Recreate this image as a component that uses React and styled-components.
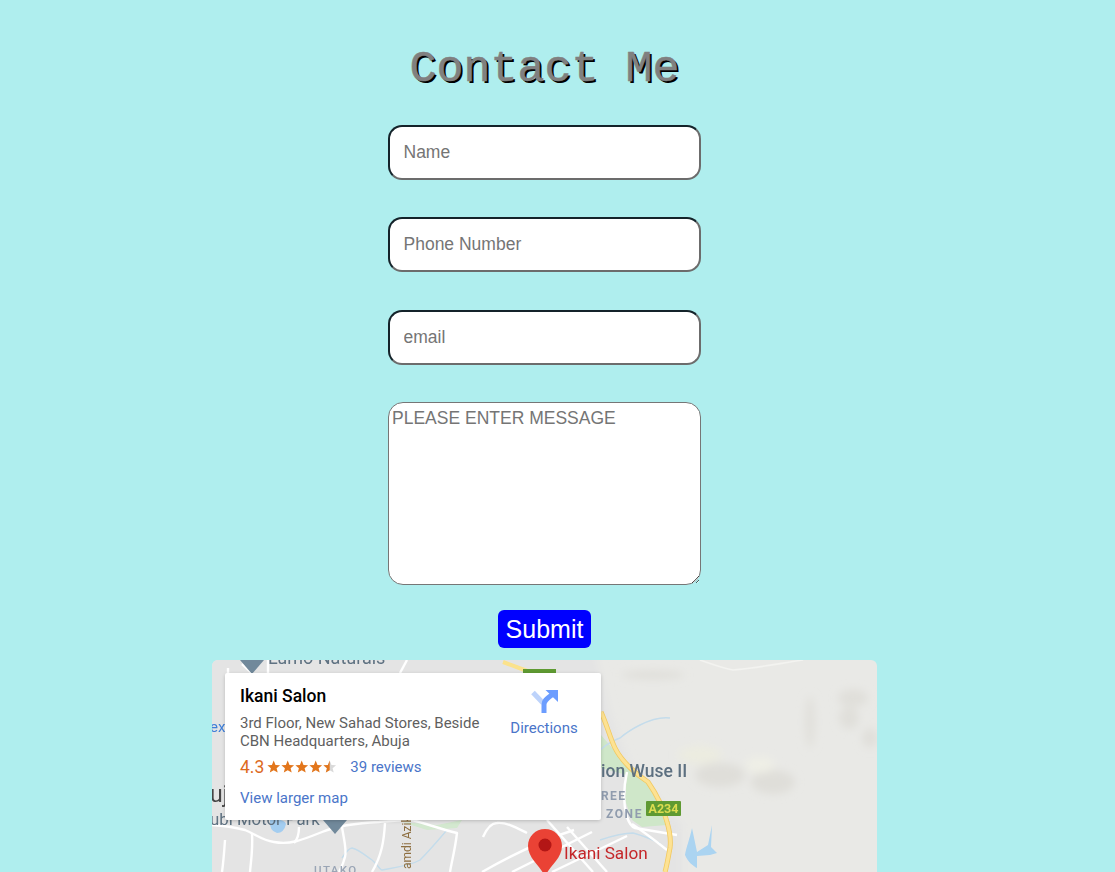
// App.jsx

import React from 'react';
import styled, { createGlobalStyle } from 'styled-components';

const GlobalStyle = createGlobalStyle`
  html, body {
    margin: 0;
    height: 872px;
    overflow: hidden;
    background-color: #afeeee;
  }
`;

const Page = styled.div`
  width: 1089px;
  height: 872px;
  padding-top: 44px;
  box-sizing: border-box;
  display: flex;
  flex-direction: column;
  align-items: center;
  overflow: hidden;
  font-family: "Liberation Sans", Arial, sans-serif;
`;

const Title = styled.h1`
  margin: 0 0 29.8px;
  height: 51px;
  line-height: 51px;
  font-family: "Liberation Mono", "Courier New", monospace;
  font-size: 45px;
  font-weight: 400;
  color: #808080;
  -webkit-text-stroke: 0.5px #808080;
  text-shadow: 2px 2px 0 #000;
`;

const Form = styled.form`
  display: flex;
  flex-direction: column;
  align-items: center;
  gap: 37.5px;
`;

const Input = styled.input`
  width: 313px;
  height: 55px;
  box-sizing: border-box;
  padding: 0 13.5px;
  border-width: 2px;
  border-style: solid;
  border-color: #14232a #6c6c6c #6c6c6c #14232a;
  border-radius: 14px;
  background: #fff;
  font-family: inherit;
  font-size: 17.5px;
  outline: none;

  &::placeholder {
    color: #757575;
  }
`;

const Message = styled.textarea`
  display: block;
  width: 313px;
  height: 183px;
  box-sizing: border-box;
  padding: 5px 3px 2px;
  border: 1px solid #767676;
  border-radius: 15px;
  background: #fff;
  font-family: inherit;
  font-size: 17.5px;
  outline: none;

  &::placeholder {
    color: #757575;
  }
`;

const Submit = styled.button`
  display: block;
  margin-top: -12.5px;
  width: 93px;
  height: 38px;
  padding: 0;
  border: none;
  border-radius: 6px;
  background-color: #0000ff;
  color: #fff;
  font-family: inherit;
  font-size: 25px;
`;

const MapFrame = styled.div`
  position: relative;
  flex: none;
  margin-top: 12px;
  width: 665px;
  height: 212px;
  border-radius: 6px 6px 0 0;
  overflow: hidden;
  background-color: #e9e9e6;
`;

const MapCanvas = styled.svg`
  display: block;
  font-family: Roboto, "Liberation Sans", sans-serif;
`;

const PlaceCard = styled.div`
  position: absolute;
  top: 13px;
  left: 13px;
  width: 376px;
  height: 147px;
  box-sizing: border-box;
  padding: 12px 12px 0 15px;
  display: flex;
  justify-content: space-between;
  background: #fff;
  border-radius: 2px;
  box-shadow: 0 1px 4px -1px rgba(0, 0, 0, 0.3);
  font-family: Roboto, "Liberation Sans", sans-serif;
`;

const PlaceInfo = styled.div`
  width: 250px;
`;

const PlaceName = styled.div`
  font-size: 17.5px;
  font-weight: 500;
  line-height: 22px;
  color: #000;
`;

const Address = styled.div`
  margin-top: 7px;
  font-size: 15px;
  line-height: 18px;
  color: #5f5f5f;
`;

const RatingRow = styled.div`
  margin-top: 7px;
  height: 20px;
  display: flex;
  align-items: center;
`;

const Score = styled.span`
  font-size: 17.5px;
  color: #dd6a1f;
`;

const Stars = styled.svg`
  margin: 0 13px 0 3px;
`;

const CardLink = styled.a`
  font-size: 15px;
  color: #4a75c9;
  text-decoration: none;
`;

const LargerMap = styled(CardLink)`
  display: block;
  margin-top: 12px;
  line-height: 18px;
`;

const DirectionsBox = styled.div`
  width: 90px;
  margin-top: 5px;
  display: flex;
  flex-direction: column;
  align-items: center;
  gap: 6px;
`;

const starPath = (x) =>
  `M${x + 6.7} 0.6 L${x + 8.5} 4.9 L${x + 13.1} 5.2 L${x + 9.6} 8.2 L${x + 10.7} 12.6 L${x + 6.7} 10.2 L${x + 2.8} 12.6 L${x + 3.9} 8.2 L${x + 0.4} 5.2 L${x + 4.9} 4.9 Z`;

const RatingStars = () => (
  <Stars width="70" height="14" viewBox="0 0 70 14">
    {[0, 14, 28, 42].map((x) => (
      <path key={x} d={starPath(x)} fill="#e2761c" />
    ))}
    <path d={starPath(56)} fill="#d9d9d9" />
    <path d="M62.7 0.6 L60.9 4.9 L56.4 5.2 L59.9 8.2 L58.8 12.6 L62.7 10.2 Z" fill="#e2761c" />
  </Stars>
);

const DirectionsIcon = () => (
  <svg width="28" height="23" viewBox="0 0 28 23">
    <path d="M3 2.5 L13 13" stroke="#bdd3fb" strokeWidth="5" fill="none" />
    <path d="M14 23 V14.5 C14 10 18 8 23 4" stroke="#6c9dff" strokeWidth="5" fill="none" />
    <path d="M15.5 0 H28 V12 Z" fill="#6c9dff" />
  </svg>
);

const roads = [
  'M0 165 C15 166 25 168 33 170 C45 175 50 180 62 182 C78 185 90 180 110 172 C125 166 145 163 167 162 C180 161 190 160 200 160 C215 164 232 170 245 173 C243 190 240 200 238 212',
  'M40 173 C41 190 39 200 38 212',
  'M13 180 C12 195 11 205 10 212',
  'M87 167 C87 175 85 180 82 183',
  'M130 167 C132 180 135 190 133 197 C131 205 129 208 127 212',
  'M173 163 C172 180 170 195 160 212',
  'M271 177 C275 168 280 163 285 163 C295 162 305 168 315 173',
  'M335 160 L381 212',
  'M355 167 L395 212',
  'M270 212 C300 195 330 180 362 170',
  'M300 212 L380 172',
  'M340 212 L415 176',
  'M415 157 C417 163 420 167 423 168 L465 175',
  'M415 112 C412 125 410 140 415 157',
  'M420 164 C432 172 445 182 455 190',
  'M16 8 L16 13',
  'M56 0 L56 13',
  'M188 13 L195 0',
  'M30 4 L40 13',
];

const highway = 'M389 52 C395 65 398 78 403 88 C410 102 425 115 436 122 C445 135 452 150 455 162 C458 172 459 180 458 188 C456 198 455 205 453 212';

const Map = () => (
  <MapCanvas width="665" height="212" viewBox="0 0 665 212">
    <defs>
      <filter id="soft" x="-5%" y="-5%" width="110%" height="110%">
        <feGaussianBlur stdDeviation="0.5" />
      </filter>
      <filter id="hill" x="-30%" y="-30%" width="160%" height="160%">
        <feGaussianBlur stdDeviation="4" />
      </filter>
    </defs>

    <g filter="url(#hill)">
      <path d="M-20 -20 H380 L400 60 L420 110 L470 165 L470 232 H-20 Z" fill="#e4e4e4" />
      <ellipse cx="508" cy="115" rx="25" ry="12" fill="#dfded9" />
      <ellipse cx="561" cy="122" rx="22" ry="12" fill="#dfded9" />
      <ellipse cx="598" cy="62" rx="5" ry="26" fill="#e1e0db" />
      <ellipse cx="641" cy="38" rx="15" ry="9" fill="#e0dfda" />
      <ellipse cx="637" cy="58" rx="10" ry="11" fill="#e0dfda" />
      <ellipse cx="658" cy="78" rx="8" ry="10" fill="#e0dfda" />
      <ellipse cx="441" cy="15" rx="32" ry="4" fill="#dfded9" />
      <ellipse cx="488" cy="95" rx="22" ry="9" fill="#ecece0" />
      <ellipse cx="548" cy="105" rx="14" ry="8" fill="#efefe6" />
    </g>

    <g filter="url(#soft)">
      <path d="M389 75 L415 105 L436 122 L455 165 L430 167 L420 160 L413 140 L415 115 L389 108 Z" fill="#cfe7c9" />
      <path d="M190 162 L225 165 L250 160 L245 168 L215 170 Z" fill="#d3e8cf" />

      <path d="M58 160 q14 -2 16 4 q-2 9 -9 9 q-8 -2 -7 -13" fill="#a3cdf0" />
      <path d="M130 198 C134 192 138 188 140 188 C148 190 155 197 160 200 C165 204 168 210 170 210 C180 208 198 206 208 200 C218 190 228 178 235 170" stroke="#c4dceb" strokeWidth="1.4" fill="none" />
      <path d="M388 90 C395 84 402 80 408 78 C415 72 422 68 428 65 C438 60 450 57 458 58" stroke="#c4dceb" strokeWidth="1.4" fill="none" />
      <path d="M388 180 C400 176 412 173 421 173 C430 175 440 180 448 183" stroke="#c4dceb" strokeWidth="1.4" fill="none" />
      <path d="M480 168 C478 178 474 188 473 195 C476 202 481 206 485 208 L485 196 L498 195 L505 193 L499 187 L500 165 L496 185 L485 192 Z" fill="#abd4f1" />

      <g stroke="#fff" strokeWidth="2.4" fill="none" strokeLinejoin="round">
        {roads.map((d) => (
          <path key={d} d={d} />
        ))}
      </g>
      <path d="M488 0 C500 4 510 8 521 10 C545 8 570 3 591 0" stroke="#f3f3f0" strokeWidth="1.6" fill="none" />

      <path d="M291 2 L318 12" stroke="#fbe28c" strokeWidth="4" fill="none" />
      <path d={highway} stroke="#f2c95f" strokeWidth="5" fill="none" />
      <path d={highway} stroke="#fde293" strokeWidth="3.4" fill="none" />

      <path d="M28 0 H52 L40 14 Z" fill="#71899b" />
      <path d="M111 160 H135 L123 174 Z" fill="#71899b" />

      <text x="56" y="4" fontSize="18" fill="#5f7282">Lumo Naturals</text>
      <text x="-2" y="72" fontSize="15" fill="#3f7fd8">ext</text>
      <text x="-2" y="142" fontSize="23" fill="#444">uj</text>
      <text x="-2" y="165" fontSize="16.8" fill="#5f7282">ubi Motor Park</text>
      <text x="389" y="117" fontSize="17.5" fontWeight="500" fill="#5d7080">ion Wuse II</text>
      <text x="389" y="140" fontSize="12" fontWeight="700" letterSpacing="1.4" fill="#909cae">REE</text>
      <text x="394" y="158" fontSize="12" fontWeight="700" letterSpacing="1.6" fill="#909cae">ZONE</text>
      <text x="102" y="214" fontSize="11.5" fontWeight="500" letterSpacing="1.4" fill="#9aa5b5">UTAKO</text>
      <text transform="translate(199 209) rotate(-90)" fontSize="12" fill="#8d6e3f">amdi Azik</text>

      <rect x="434" y="141" width="35" height="15" rx="1" fill="#5f9a33" />
      <text x="451.5" y="153" textAnchor="middle" fontSize="12.5" fontWeight="700" fill="#dcdc50">A234</text>
      <rect x="311" y="9" width="33" height="8" fill="#5f9a33" />

      <path
        d="M333 169 C323.5 169 316 176.5 316 186 C316 198 328 206 333 216 C338 206 350 198 350 186 C350 176.5 342.5 169 333 169 Z"
        fill="#ea4335"
      />
      <circle cx="333" cy="185" r="6.5" fill="#b31412" />
      <text x="352" y="199" fontSize="17.2" fill="#c5282a">Ikani Salon</text>
    </g>
  </MapCanvas>
);

const App = () => {
  return (
    <Page>
      <GlobalStyle />
      <Title>Contact Me</Title>
      <Form onSubmit={(e) => e.preventDefault()}>
        <Input type="text" placeholder="Name" />
        <Input type="text" placeholder="Phone Number" />
        <Input type="email" placeholder="email" />
        <Message placeholder="PLEASE ENTER MESSAGE" />
        <Submit type="submit">Submit</Submit>
      </Form>
      <MapFrame>
        <Map />
        <PlaceCard>
          <PlaceInfo>
            <PlaceName>Ikani Salon</PlaceName>
            <Address>
              3rd Floor, New Sahad Stores, Beside
              <br />
              CBN Headquarters, Abuja
            </Address>
            <RatingRow>
              <Score>4.3</Score>
              <RatingStars />
              <CardLink href="#">39 reviews</CardLink>
            </RatingRow>
            <LargerMap href="#">View larger map</LargerMap>
          </PlaceInfo>
          <DirectionsBox>
            <DirectionsIcon />
            <CardLink href="#">Directions</CardLink>
          </DirectionsBox>
        </PlaceCard>
      </MapFrame>
    </Page>
  );
};

export default App;
